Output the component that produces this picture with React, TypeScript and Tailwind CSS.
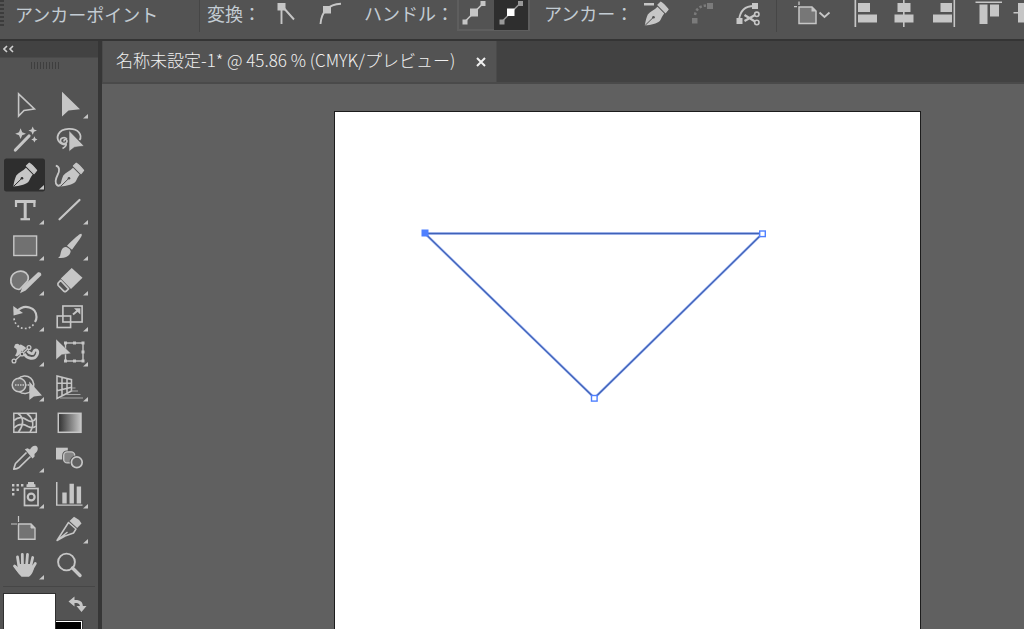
import type { ReactNode } from 'react';

const C = '#c6c6c6';

type Tool = { name: string; art: ReactNode; more?: boolean; active?: boolean };

const Nib = ({ cut = '#535353' }: { cut?: string }) => (
  <>
    <path d="M10.3 28.6 C11 24 12 20 13.3 17.5 C15.5 14.5 20 13 23 9.8 L29.7 16.4 C27.5 19 27 21.5 25.3 24 C22 27 17 27.7 10.3 28.6Z" fill={C} />
    <path d="M23.4 7.9 L26.3 5.2 Q29 6.5 33.6 12.4 L31 15.6Z" fill={C} stroke={C} strokeWidth="1.2" strokeLinejoin="round" />
    <path d="M10.6 28.4 L18.6 20.6" stroke={cut} strokeWidth="1" />
    <circle cx="19" cy="20.2" r="1.3" fill={cut} />
  </>
);

const tools: Tool[] = [
  { name: '選択ツール', art: <path d="M15.6 6.8 L15.6 29 L21 23.4 L31.4 22Z" fill="none" stroke={C} strokeWidth="1.6" /> },
  { name: 'ダイレクト選択ツール', more: true, art: <path d="M15 4.8 L15 29.6 L21.5 23.6 L33 22.3Z" fill={C} /> },
  {
    name: '自動選択ツール',
    art: (
      <g fill={C}>
        <path d="M12.4 28 L26 14" stroke={C} strokeWidth="3.2" strokeLinecap="round" />
        <path d="M17.6 6.2 L19.2 10.2 L23 11.7 L19.2 13.2 L17.6 17 L16 13.2 L12.2 11.7 L16 10.2Z" />
        <path d="M29.7 4.4 L31 7.4 L34 8.6 L31 9.8 L29.7 12.8 L28.4 9.8 L25.4 8.6 L28.4 7.4Z" />
        <path d="M31.4 14.2 L32.4 16.4 L34.5 17.4 L32.4 18.4 L31.4 20.6 L30.4 18.4 L28.3 17.4 L30.4 16.4Z" />
      </g>
    ),
  },
  {
    name: 'なげなわツール',
    art: (
      <>
        <path d="M19.5 22.5 C12 23 9 17 11.5 12 C15 5.5 28 5.5 32 10.5 C34.2 13.5 34 16 32.5 18" fill="none" stroke={C} strokeWidth="1.8" />
        <path d="M20 17 C17 14 12.5 16.5 13.6 19.6 C14.6 22.5 20 22 20 19 C20 17 16.8 17 17 19.5 M19 21 C20 24 17.5 25.5 15.5 26.5" fill="none" stroke={C} strokeWidth="1.6" />
        <path d="M22 8.5 L22 29.5 L27.5 25.3 L37 24Z" fill={C} stroke="#535353" strokeWidth="0.6" />
      </>
    ),
  },
  { name: 'ペンツール', more: true, active: true, art: <Nib cut="#2e2e2e" /> },
  {
    name: '曲線ツール',
    art: (
      <>
        <path d="M8.8 7.6 C13 8.5 12.6 13 10.8 16.5 C8.5 21 8 25 10 27 C11.5 28.5 13 27.5 14 26" fill="none" stroke={C} strokeWidth="1.8" />
        <g transform="translate(3 0)"><Nib /></g>
      </>
    ),
  },
  {
    name: '文字ツール', more: true,
    art: (
      <>
        <path d="M12 8.5 H32.4 M22.2 8 V26" stroke={C} strokeWidth="3" />
        <path d="M13 7 V14 M31.4 7 V14" stroke={C} strokeWidth="2.2" />
        <path d="M17.5 26.2 H27" stroke={C} strokeWidth="2.2" />
      </>
    ),
  },
  { name: '直線ツール', more: true, art: <path d="M12.5 26.3 L32.5 7" stroke={C} strokeWidth="2.2" strokeLinecap="round" /> },
  { name: '長方形ツール', more: true, art: <rect x="10.8" y="7" width="22.8" height="19.5" fill="#717171" stroke={C} strokeWidth="1.4" /> },
  {
    name: 'ブラシツール', more: true,
    art: (
      <g fill={C}>
        <path d="M34.5 5 C35.8 6.5 33.5 9 25 20.8 L20 16.7 C28 9 33.200 4 34.500 5Z" />
        <path d="M19 18 C21.500 18.500 24 21 23.600 22.800 C22.500 28 17 29.500 11 28.700 C14 27.500 13 25 14.500 21.300 C15.600 18.700 17.500 17.700 19 18Z" />
      </g>
    ),
  },
  {
    name: 'Shaper ツール', more: true,
    art: (
      <>
        <path d="M16 25.500 C10 25 7 20 8 14.500 C9.500 8 18 5 23 9 C25 11 26 14 24.500 17 L17 25Z" fill="#737373" stroke={C} strokeWidth="1.700" />
        <path d="M17 29.200 L19.500 22.700 L35 8.300 Q38.500 7.800 38.300 11.300 L22.700 26.500Z" fill={C} />
      </>
    ),
  },
  {
    name: '消しゴムツール', more: true,
    art: (
      <>
        <path d="M24.700 4 L35.500 13.800 L24 25 L13.800 14.500Z" fill={C} />
        <path d="M13.700 16.300 L11 19.300 Q10.800 21 11.200 21.500 L17 27.300 Q18 28 19 27.300 L21.600 24.800Z" fill="none" stroke={C} strokeWidth="1.700" strokeLinejoin="round" />
      </>
    ),
  },
  {
    name: '回転ツール', more: true,
    art: (
      <>
        <path d="M14.500 11 C21 3.500 33.500 7 33.500 17 C33.500 19 33 20.500 32 22" fill="none" stroke={C} strokeWidth="2.200" />
        <path d="M30.500 24.500 A11 11 0 0 1 11 17.500" fill="none" stroke={C} strokeWidth="1.700" strokeDasharray="1.800 2.200" />
        <path d="M10.200 6 L10.600 15.600 L20 13Z" fill={C} />
      </>
    ),
  },
  {
    name: '拡大・縮小ツール', more: true,
    art: (
      <>
        <rect x="15.900" y="6" width="19.200" height="16" fill="none" stroke={C} strokeWidth="1.600" />
        <rect x="10.200" y="16" width="13.400" height="11.500" fill="none" stroke={C} strokeWidth="1.600" />
        <path d="M26 14.500 L31 10.200" stroke={C} strokeWidth="2" />
        <path d="M27 8.200 H33.300 V14.500Z" fill={C} />
      </>
    ),
  },
  {
    name: '線幅ツール', more: true,
    art: (
      <>
        <path d="M11 12.500 C13.500 12.500 15.500 16.500 12 20.500 L15 22 C18.500 19 18.500 15 17.500 11.500 C17 9.500 14.500 7.500 12 9.500Z" fill={C} />
        <path d="M13 12 C17 11 20.500 15.500 21.500 19 C23.500 23.500 31.500 25.500 34 20 C36 16 33.500 14 31.500 15.500 C30 17 31 19.500 28 18.500 C24.500 17.500 22 12 18 11" fill="none" stroke={C} strokeWidth="2.800" strokeLinecap="round" />
        <path d="M11.500 26 L26 12.500" stroke="#535353" strokeWidth="3" />
        <path d="M11.500 26 L26 12.500" stroke={C} strokeWidth="1.300" />
        <g fill="#535353" stroke={C} strokeWidth="1.300"><circle cx="11" cy="26" r="1.900" /><circle cx="19" cy="19" r="1.900" /><circle cx="26" cy="12.500" r="1.900" /></g>
      </>
    ),
  },
  {
    name: '自由変形ツール', more: true,
    art: (
      <>
        <rect x="18.500" y="8" width="17.500" height="18" fill="none" stroke={C} strokeWidth="1.400" />
        <g fill={C}>
          <path d="M17 6.500h3v3h-3z M26 6.500h3v3h-3z M34.500 6.500h3v3h-3z M34.500 15.500h3v3h-3z M34.500 24.500h3v3h-3z M26 24.500h3v3h-3z M17 24.500h3v3h-3z" />
          <path d="M9 4 L9 24.700 L14.700 19.700 L24 18.500Z" stroke="#535353" strokeWidth="0.400" />
        </g>
      </>
    ),
  },
  {
    name: 'シェイプ形成ツール', more: true,
    art: (
      <>
        <circle cx="16" cy="15" r="6.800" fill="#686868" stroke={C} strokeWidth="1.500" />
        <path d="M15 9 A9 8.800 0 1 1 16 21.500" fill="none" stroke={C} strokeWidth="1.600" />
        <path d="M12 15 H26" stroke={C} strokeWidth="1.400" strokeDasharray="1.500 1" />
        <path d="M26.300 11.500 L26.300 30 L30.800 26.500 L39 25.600Z" fill={C} />
      </>
    ),
  },
  {
    name: '遠近グリッドツール', more: true,
    art: (
      <>
        <path d="M10 6 V28.500 L24.500 21 V9.700Z M15 7.500 V26 M20 8.800 V23.300 M10 13.300 L24.500 13.300 M10 20.800 L24.500 17.200" fill="none" stroke={C} strokeWidth="1.500" />
        <path d="M25 18 H28.500 M24 21 H31 M19 24.500 H33.500 M13 28 H36" stroke="#a5a5a5" strokeWidth="1.200" />
      </>
    ),
  },
  {
    name: 'メッシュツール',
    art: (
      <>
        <rect x="10.800" y="7.300" width="22.500" height="19" fill="none" stroke={C} strokeWidth="1.500" />
        <path d="M15 7.500 C22 12 20 20 15.500 26 M24 7.500 C31 13 31 20 27 26 M11 14.500 C16 10 21 12 24 14 C27 16 31 16 33 12 M11 22 C16 17 21 18 25 20.500 C28 22 31 22 33 20" fill="none" stroke={C} strokeWidth="1.700" />
      </>
    ),
  },
  {
    name: 'グラデーションツール',
    art: (
      <>
        <defs><linearGradient id="ramp"><stop offset="0" stopColor="#303030" /><stop offset="1" stopColor="#c6c6c6" /></linearGradient></defs>
        <rect x="11.300" y="7.300" width="22.700" height="19" fill="url(#ramp)" stroke={C} strokeWidth="1.500" />
      </>
    ),
  },
  {
    name: 'スポイトツール', more: true,
    art: (
      <>
        <path d="M23.500 11.500 L12.500 22.500 Q11.500 25 10.800 28.200 Q14 28 16.500 26.200 L27.500 15.500" fill="none" stroke={C} strokeWidth="1.700" strokeLinejoin="round" />
        <path d="M21.800 8.200 L24.500 7.200 L27 8.500 C28.500 5.500 31 4 33.300 5 C36 7 34.800 10.500 31.500 13 L31.600 15.500 L29.500 17.500Z" fill={C} />
      </>
    ),
  },
  {
    name: 'ブレンドツール',
    art: (
      <>
        <rect x="9" y="6.700" width="11.800" height="11.800" fill={C} />
        <rect x="16.700" y="10.900" width="11" height="11" rx="3.500" fill="#858585" stroke="#535353" strokeWidth="3" />
        <rect x="16.700" y="10.900" width="11" height="11" rx="3.500" fill="#858585" stroke={C} strokeWidth="1.400" />
        <circle cx="29.800" cy="21.300" r="5.400" fill="#535353" stroke="#535353" strokeWidth="3.500" />
        <circle cx="29.800" cy="21.300" r="5.400" fill="#606060" stroke={C} strokeWidth="1.700" />
      </>
    ),
  },
  {
    name: 'シンボルスプレーツール', more: true,
    art: (
      <>
        <path d="M9 7h2.400v2.400h-2.400z M13.500 7h2.400v2.400h-2.400z M18 7h2.400v2.400h-2.400z M9 11.500h2.400v2.400h-2.400z M13.500 11.500h2.400v2.400h-2.400z M9 16h2.400v2.400h-2.400z M23.500 10 V7.500 L25 7 V5 H31 V7 L32.500 7.500 V10Z" fill={C} />
        <rect x="21.500" y="11.500" width="13.500" height="17" fill="none" stroke={C} strokeWidth="1.700" />
        <circle cx="28.200" cy="20" r="3.400" fill="none" stroke={C} strokeWidth="2.200" />
      </>
    ),
  },
  {
    name: '棒グラフツール', more: true,
    art: <path d="M9 5h1.500v22.500h25v1.300h-26.500z M15.300 15.500h4.400v11h-4.400z M22.500 6.700h4.400v19.800h-4.400z M29.700 9.500h4.400v17h-4.400z" fill={C} />,
  },
  {
    name: 'アートボードツール',
    art: (
      <>
        <path d="M15.500 12 H28 L32 16 V27.300 H15.500Z" fill="#737373" stroke={C} strokeWidth="1.400" />
        <path d="M28 12 V16 H32Z" fill={C} stroke={C} />
        <path d="M15.500 4 V10 M8 12 H14" stroke={C} strokeWidth="1.200" />
      </>
    ),
  },
  {
    name: 'スライスツール', more: true,
    art: (
      <>
        <path d="M10 28.500 L21.500 10.500 L29 17 L26.500 21 L18 24 L10 28.500 L20.500 20" fill="none" stroke={C} strokeWidth="1.500" strokeLinejoin="round" />
        <path d="M22.500 9 L27 4.800 Q32 7 34.500 11.500 L30.200 16Z" fill={C} />
      </>
    ),
  },
  {
    name: '手のひらツール', more: true,
    art: (
      <>
        <path d="M16 19 L14.500 9 M19.500 18 L19.300 6.300 M23.500 18 L24.500 6.300 M27.500 19 L29.700 9.500 M28.500 22 L32.300 15.500 M17 25 L11.500 18" stroke={C} strokeWidth="2.800" strokeLinecap="round" />
        <path d="M14.800 16 H28.800 L31 20 C30 24 29 26.500 26 28.700 H18.500 C15.500 25.500 13 22 10.500 18.500 L12.500 17 L15.300 19.500Z" fill={C} />
      </>
    ),
  },
  {
    name: 'ズームツール',
    art: (
      <>
        <circle cx="19.500" cy="14" r="8.400" fill="none" stroke={C} strokeWidth="1.900" />
        <path d="M25.500 20 L33 27.500" stroke={C} strokeWidth="3.400" strokeLinecap="round" />
      </>
    ),
  },
];

function ToolButton({ tool }: { tool: Tool }) {
  return (
    <button type="button" aria-label={tool.name} aria-pressed={!!tool.active} className="flex items-start justify-center">
      <svg viewBox="0 0 44 35" className="h-[35px] w-11" aria-hidden="true">
        {tool.active && <rect x="1" y="0.500" width="41" height="33" rx="2.500" fill="#2e2e2e" />}
        {tool.art}
        {tool.more && <path d="M36 31.500 H41 V27Z" fill={C} />}
      </svg>
    </button>
  );
}

function BarButton({ label, className, children }: { label: string; className: string; children: ReactNode }) {
  return (
    <button type="button" aria-label={label} className={`flex h-[30px] shrink-0 items-start ${className}`}>
      {children}
    </button>
  );
}

const icon = 'h-[30px] w-full';

function ControlBar() {
  return (
    <header className="flex h-[41px] items-start overflow-hidden border-b-2 border-[#343434] bg-[#535353] text-[18px] leading-[26px] whitespace-nowrap text-[#c3ccd3]">
      <div className="h-7 w-1 shrink-0 bg-[repeating-linear-gradient(#3c3c3c_0_2px,#535353_2px_4px)]" />
      <span className="w-[195px] shrink-0 pt-px pl-[11px]">アンカーポイント</span>
      <div className="h-8 w-px shrink-0 bg-[#464646]" />
      <span className="w-[71px] shrink-0 pl-[7px]">変換：</span>
      <BarButton label="コーナーポイントに切り替え" className="w-10">
        <svg viewBox="0 0 40 30" className={icon}><path d="M10.500 5 V24 M11 6 L23 19.500" stroke={C} strokeWidth="1.900" /><path d="M6.500 3h8v7.500h-8z" fill={C} /></svg>
      </BarButton>
      <BarButton label="スムーズポイントに切り替え" className="w-[53px]">
        <svg viewBox="0 0 53 30" className={icon}><path d="M9.500 24 C10.500 12 17 4.500 30 3.800" fill="none" stroke={C} strokeWidth="1.900" /><path d="M12 6h8v7.500h-8z" fill={C} /></svg>
      </BarButton>
      <span className="w-[93px] shrink-0">ハンドル：</span>
      <div className="flex h-[31px] shrink-0 border-2 border-t-0 border-[#5e5e5e]">
        <BarButton label="複数のアンカーのハンドルを表示" className="w-[35px]">
          <svg viewBox="0 0 35 30" className={icon}><path d="M6 21.500 L24 3.500" stroke={C} strokeWidth="1.600" /><path d="M11 8.500h8v8h-8z M3.500 19.500h5v5h-5z M21.500 1h5v5h-5z" fill={C} /></svg>
        </BarButton>
        <BarButton label="複数のアンカーのハンドルを隠す" className="w-[34px] bg-[#2e2e2e]">
          <svg viewBox="0 0 34 30" className={icon}><path d="M8 21.500 L26 3.500" stroke="#999" strokeWidth="1.500" /><path d="M5.500 19.500h5v5h-5z M24 1h5v5h-5z" fill="#999" /><path d="M13 8.500h7.500v7.500h-7.500z" fill="#fff" /></svg>
        </BarButton>
      </div>
      <span className="w-[108px] shrink-0 pl-3.5">アンカー：</span>
      <BarButton label="選択したアンカーポイントを削除" className="w-[50px]">
        <svg viewBox="0 0 50 30" className={icon}><g transform="translate(-3.500 -3)"><Nib /></g><path d="M6 3h10v2.500h-10z" fill={C} /></svg>
      </BarButton>
      <BarButton label="選択した終点を連結" className="w-11">
        <svg viewBox="0 0 44 30" className={icon}><path d="M4 18h5.500v5.500h-5.500z M19 3h6v6h-6z" fill="#7b7b7b" /><path d="M7 15 C8 9 12 6 18 5.500" fill="none" stroke="#7b7b7b" strokeWidth="2.500" strokeDasharray="2.500 2" /></svg>
      </BarButton>
      <BarButton label="選択したアンカーポイントでパスをカット" className="w-11">
        <svg viewBox="0 0 44 30" className={icon}>
          <path d="M7 20 C8 11 13 6 22 6" fill="none" stroke={C} strokeWidth="1.800" />
          <path d="M4.500 18h6v6h-6z M20 3h6v6h-6z" fill={C} />
          <path d="M12.500 15 L23 21.500 M12.500 21 L23 15" stroke={C} strokeWidth="2.200" /><circle cx="24.800" cy="14.300" r="2.200" fill="none" stroke={C} strokeWidth="1.600" /><circle cx="24.800" cy="22.500" r="2.200" fill="none" stroke={C} strokeWidth="1.600" />
        </svg>
      </BarButton>
      <div className="h-8 w-px shrink-0 bg-[#464646]" />
      <BarButton label="アートボード整列" className="w-[70px]">
        <svg viewBox="0 0 70 30" className={icon}>
          <path d="M22 7 H35 L39 11 V23.500 H22Z" fill="#777" stroke={C} strokeWidth="1.500" /><path d="M34.500 6.500 V11.500 H39.500Z" fill={C} />
          <path d="M22 1.500 V5 M17 6.700 H20" stroke={C} strokeWidth="1.300" /><path d="M42.500 12.500 L47.500 17 L52.500 12.500" fill="none" stroke={C} strokeWidth="1.800" />
        </svg>
      </BarButton>
      <BarButton label="水平方向左に整列" className="w-10">
        <svg viewBox="0 0 40 30" className={icon}><path d="M7.500 0h1.700v27h-1.700z M11 3h12v9h-12z M11 14.500h19v8h-19z" fill={C} /></svg>
      </BarButton>
      <BarButton label="水平方向中央に整列" className="w-10">
        <svg viewBox="0 0 40 30" className={icon}><path d="M16 0h1.600v27h-1.600z M10.500 3h13v9h-13z M7.500 14.500h19v8h-19z" fill={C} /></svg>
      </BarButton>
      <BarButton label="水平方向右に整列" className="w-10">
        <svg viewBox="0 0 40 30" className={icon}><path d="M26.500 0h1.600v27h-1.600z M13.500 3h11.500v9h-11.500z M6 14.500h19v8h-19z" fill={C} /></svg>
      </BarButton>
      <BarButton label="垂直方向上に整列" className="w-10">
        <svg viewBox="0 0 40 30" className={icon}><path d="M8.500 1.500h26.500v1.500h-26.500z M12.500 4.500h8v19.500h-8z M23 4.500h9v12h-9z" fill={C} /></svg>
      </BarButton>
      <BarButton label="垂直方向中央に整列" className="w-10">
        <svg viewBox="0 0 40 30" className={icon}><path d="M6.500 12h30v1.500h-30z M11 3h8v19.500h-8z" fill={C} /></svg>
      </BarButton>
    </header>
  );
}

function ToolPanel() {
  return (
    <aside className="flex w-[102px] shrink-0 flex-col border-r-4 border-[#363636] bg-[#535353]">
      <button type="button" aria-label="パネルを折りたたむ" className="flex h-4 shrink-0 items-center bg-[#424242] pl-[3px]">
        <svg viewBox="0 0 11 8" className="h-2 w-[11px]"><path d="M4 1 L1 4 L4 7 M10 1 L7 4 L10 7" fill="none" stroke="#d0d0d0" strokeWidth="1.600" /></svg>
      </button>
      <div className="flex h-[30px] shrink-0 justify-center border-t border-[#4a4a4a] pt-1 pr-2">
        <div className="h-[7px] w-[29px] bg-[repeating-linear-gradient(90deg,#3e3e3e_0_1px,#535353_1px_3px)]" />
      </div>
      <div className="ml-[3px] grid h-[496px] w-[88px] shrink-0 auto-rows-fr grid-cols-2">
        {tools.map((tool) => <ToolButton key={tool.name} tool={tool} />)}
      </div>
      <div className="mx-[3px] mt-[3px] h-px shrink-0 bg-[#464646]" />
      <div className="flex min-h-0 flex-1 items-start overflow-hidden pt-1.5 pl-[3px]">
        <button type="button" aria-label="塗り" className="h-20 w-[53px] border border-[#303030] bg-white" />
        <div className="flex flex-col">
          <button type="button" aria-label="塗りと線を入れ替え" className="flex h-7 w-10 items-start pl-3">
            <svg viewBox="0 0 20 20" className="size-5"><path d="M6 8.500 H9 Q13.500 9 13.500 14" fill="none" stroke={C} strokeWidth="3" /><path d="M0.500 8.500 L6.500 3.500 V13.500Z M8.500 13 H18.500 L13.500 19Z" fill={C} /></svg>
          </button>
          <button type="button" aria-label="線" className="h-14 w-[26px] border border-l-0 border-white bg-black outline outline-[#303030]" />
        </div>
      </div>
    </aside>
  );
}

function Artboard() {
  return (
    <div className="ml-[232px] w-[587px] border border-b-0 border-[#1c1c1c] bg-white">
      <svg viewBox="0 0 585 517" className="block w-full" role="img" aria-label="三角形のパス">
        <path d="M90 121.500 H427.500 L259.500 286 Z" fill="none" stroke="#a9bdf5" strokeWidth="2.600" />
        <path d="M90 121.500 H427.500 L259.500 286 Z" fill="none" stroke="#3f62b8" strokeWidth="1.300" />
        <rect x="86.500" y="117.500" width="7" height="7" fill="#4f80ff" />
        <g fill="#fff" stroke="#4f80ff" strokeWidth="1.400"><rect x="424.700" y="119" width="5.600" height="5.600" /><rect x="256.500" y="283.500" width="5.600" height="5.600" /></g>
      </svg>
    </div>
  );
}

export default function App() {
  return (
    <div className="flex h-screen flex-col overflow-hidden bg-[#606060] font-['Noto_Sans_CJK_JP',sans-serif]">
      <ControlBar />
      <div className="flex min-h-0 flex-1">
        <ToolPanel />
        <main className="flex min-w-0 flex-1 flex-col overflow-hidden">
          <div className="flex h-[43px] shrink-0 border-b-2 border-[#4a4a4a] bg-[#424242]">
            <div className="flex w-[395px] items-center border-r border-l border-[#4a4a4a] bg-[#535353] pl-[13px] text-[17px] font-light text-[#f0f0f0]">
              <span className="w-[357px] pb-1 whitespace-nowrap">名称未設定-1* @ 45.86 % (CMYK/プレビュー)</span>
              <button type="button" aria-label="閉じる" className="size-4">
                <svg viewBox="0 0 16 16" className="size-4"><path d="M4 4 L12 12 M12 4 L4 12" stroke="#f0f0f0" strokeWidth="2" /></svg>
              </button>
            </div>
          </div>
          <div className="min-h-0 flex-1 overflow-hidden pt-[27px]">
            <Artboard />
          </div>
        </main>
      </div>
    </div>
  );
}
